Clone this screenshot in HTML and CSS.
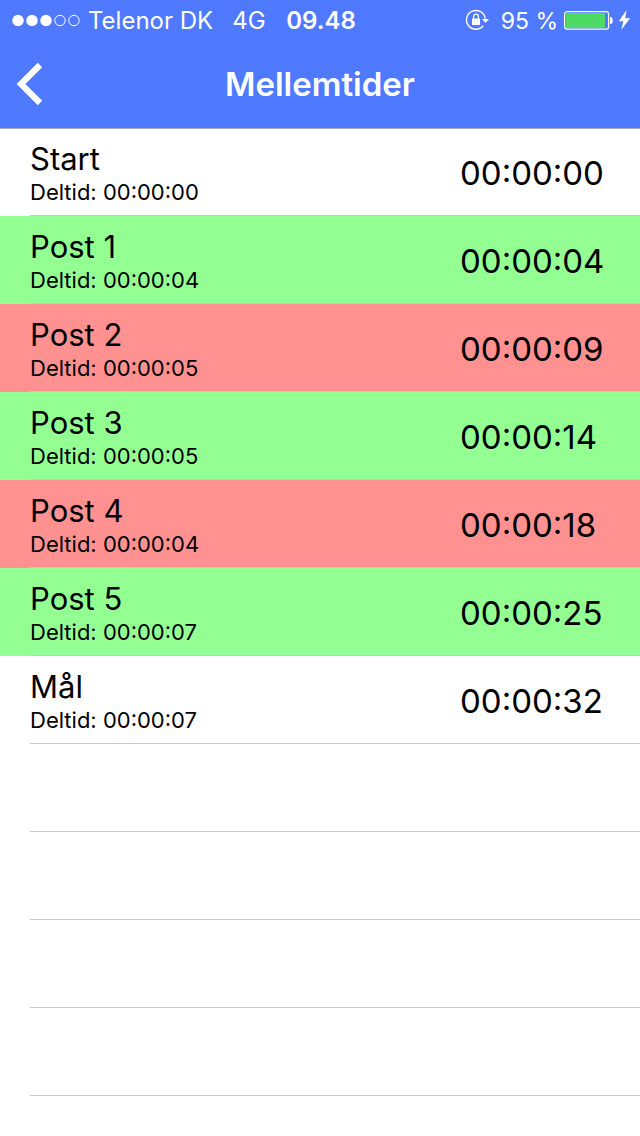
FILE: index.html
```html
<!DOCTYPE html>
<html lang="da">
<head>
<meta charset="utf-8">
<meta name="viewport" content="width=device-width, initial-scale=1">
<title>Mellemtider</title>
<link rel="stylesheet" href="styles.css">
</head>
<body>
<header class="header">
  <div class="status">
    <div class="status-group">
      <svg class="signal" width="70" height="14" viewBox="0 0 70 14" aria-hidden="true">
        <g fill="#fff"><circle cx="7" cy="7.5" r="5.7"/><circle cx="21" cy="7.5" r="5.7"/><circle cx="35" cy="7.5" r="5.7"/></g>
        <g fill="none" stroke="#fff"><circle cx="49" cy="7.5" r="5.2"/><circle cx="63" cy="7.5" r="5.2"/></g>
      </svg>
      <span class="label carrier">Telenor DK</span>
      <span class="label">4G</span>
    </div>
    <span class="label clock">09.48</span>
    <div class="status-group status-end">
      <svg class="lock" width="24" height="22" viewBox="0 0 24 22" aria-hidden="true">
        <path d="M18.2 16.8A9.4 9.4 0 1 1 20.2 9.5" fill="none" stroke="#fff" stroke-width="1.4"/>
        <path d="M17 10h7l-3.5 4z" fill="#fff"/>
        <rect x="7" y="9.5" width="8" height="6.5" rx="0.5" fill="#fff"/>
        <path d="M8.6 10V7.6a2.4 2.4 0 0 1 4.8 0V10" fill="none" stroke="#fff" stroke-width="1.3"/>
      </svg>
      <span class="label percent">95 %</span>
      <svg class="battery" width="67" height="20" viewBox="0 0 67 20" aria-hidden="true">
        <rect x="0.6" y="1.6" width="44" height="17.6" rx="2.4" fill="none" stroke="#fff" stroke-width="1.2"/>
        <rect x="2" y="3" width="39" height="15" fill="#4cd964"/>
        <path d="M46 7h1.2q1.6 1 1.6 3.5T47.2 14H46z" fill="#fff"/>
        <path d="M62.5 0 54.8 11.2h4.6L57.2 19.8 66.2 8.2h-5z" fill="#fff"/>
      </svg>
    </div>
  </div>
  <nav class="navbar">
    <button class="back" type="button" aria-label="Tilbage">
      <svg width="28" height="44" viewBox="0 0 28 44" aria-hidden="true">
        <path d="M24 3 5 22l19 19" fill="none" stroke="#fff" stroke-width="6.2"/>
      </svg>
    </button>
    <h1 class="title">Mellemtider</h1>
  </nav>
</header>
<main>
  <ul class="list">
    <li class="row"><div class="cell"><div><div class="name">Start</div><div class="split">Deltid: 00:00:00</div></div><time class="total">00:00:00</time></div></li>
    <li class="row green"><div class="cell"><div><div class="name">Post 1</div><div class="split">Deltid: 00:00:04</div></div><time class="total">00:00:04</time></div></li>
    <li class="row red"><div class="cell"><div><div class="name">Post 2</div><div class="split">Deltid: 00:00:05</div></div><time class="total">00:00:09</time></div></li>
    <li class="row green"><div class="cell"><div><div class="name">Post 3</div><div class="split">Deltid: 00:00:05</div></div><time class="total">00:00:14</time></div></li>
    <li class="row red"><div class="cell"><div><div class="name">Post 4</div><div class="split">Deltid: 00:00:04</div></div><time class="total">00:00:18</time></div></li>
    <li class="row green"><div class="cell"><div><div class="name">Post 5</div><div class="split">Deltid: 00:00:07</div></div><time class="total">00:00:25</time></div></li>
    <li class="row"><div class="cell"><div><div class="name">Mål</div><div class="split">Deltid: 00:00:07</div></div><time class="total">00:00:32</time></div></li>
  </ul>
  <div class="blank" aria-hidden="true">
    <div class="row"><div class="cell"></div></div>
    <div class="row"><div class="cell"></div></div>
    <div class="row"><div class="cell"></div></div>
    <div class="row"><div class="cell"></div></div>
  </div>
</main>
</body>
</html>
```
FILE: styles.css
```css
* {
  box-sizing: border-box;
}

body {
  margin: 0;
  background: #fff;
  color: #000;
  font-family: Inter, "Liberation Sans", sans-serif;
}

.header {
  position: relative;
  background: #4f79ff;
  box-shadow: 0 1px 0 #a9abb8;
  color: #fff;
}

.status {
  display: grid;
  grid-template-columns: 1fr auto 1fr;
  align-items: center;
  height: 40px;
  padding: 0 9px 0 11px;
  font-size: 24px;
  line-height: 38px;
}

.status-group {
  display: flex;
  align-items: center;
  white-space: nowrap;
}

.status-end {
  justify-content: flex-end;
}

.label {
  padding-top: 2px;
}

.signal {
  margin-right: 7px;
}

.carrier {
  margin-right: 19px;
}

.clock {
  font-weight: 600;
}

.lock {
  margin-right: 12px;
}

.percent {
  margin-right: 6px;
  font-size: 23px;
}

.navbar {
  display: grid;
  grid-template-columns: 60px 1fr 60px;
  align-items: center;
  height: 88px;
}

.back {
  display: flex;
  align-items: center;
  height: 88px;
  padding: 0 16px;
  border: 0;
  background: none;
}

.title {
  margin: 0;
  font-size: 33px;
  font-weight: 600;
  line-height: 44px;
  text-align: center;
}

.list {
  margin: 0;
  padding: 0;
  list-style: none;
}

.row {
  padding-left: 30px;
}

.green {
  background: #93ff93;
}

.red {
  background: #ff9191;
}

.cell {
  display: grid;
  grid-template-columns: 1fr 150px;
  align-items: center;
  min-height: 88px;
  padding-top: 2px;
  padding-right: 30px;
  border-bottom: 1px solid #c8c7cc;
}

.name {
  font-size: 31px;
  line-height: 38px;
}

.split {
  font-size: 22px;
  line-height: 28px;
}

.total {
  font-size: 33px;
  line-height: 44px;
}
```
